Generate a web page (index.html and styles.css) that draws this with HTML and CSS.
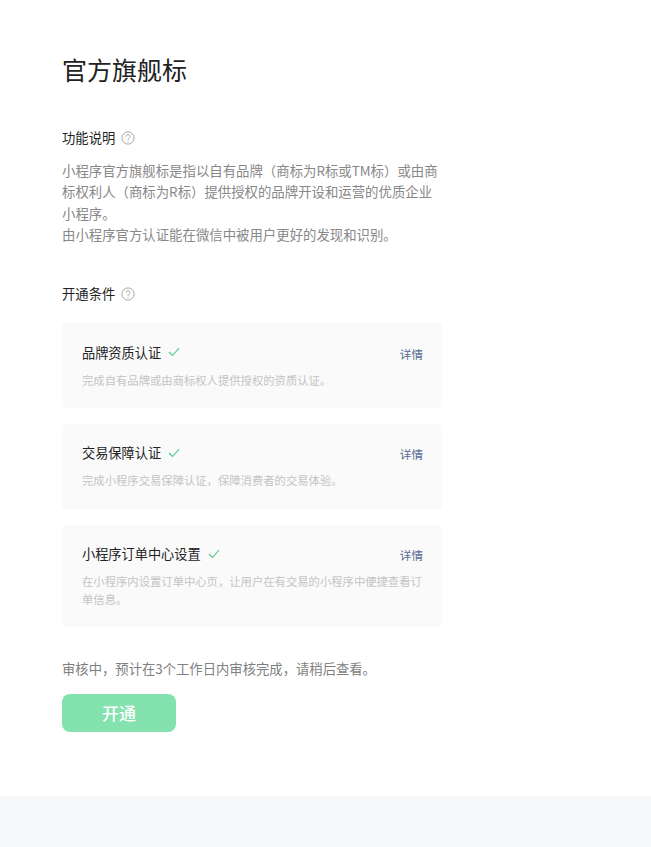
FILE: index.html
```html
<!DOCTYPE html>
<html lang="zh-CN">
<head>
<meta charset="utf-8">
<title>官方旗舰标</title>
<link rel="stylesheet" href="styles.css">
</head>
<body>
<main class="page">
  <h1 class="title">官方旗舰标</h1>
  <section class="intro">
    <h2 class="label">功能说明<svg class="help" viewBox="0 0 14 14"><circle cx="7" cy="7" r="6.1"/><path d="M5 5.5a2 2 0 1 1 3.1 1.7c-.8.5-1.1.9-1.1 1.6"/><path d="M7 9.9v1"/></svg></h2>
    <p class="desc">小程序官方旗舰标是指以自有品牌（商标为R标或TM标）或由商标权利人（商标为R标）提供授权的品牌开设和运营的优质企业小程序。<br>由小程序官方认证能在微信中被用户更好的发现和识别。</p>
  </section>
  <section class="conditions">
    <h2 class="label">开通条件<svg class="help" viewBox="0 0 14 14"><circle cx="7" cy="7" r="6.1"/><path d="M5 5.5a2 2 0 1 1 3.1 1.7c-.8.5-1.1.9-1.1 1.6"/><path d="M7 9.9v1"/></svg></h2>
    <div class="cards">
      <article class="card">
        <div class="card-head">
          <h3 class="card-title">品牌资质认证<svg class="check" viewBox="0 0 12 10"><path d="M1 5l3.5 3.5L11 1.2"/></svg></h3>
          <a class="more">详情</a>
        </div>
        <p class="card-desc">完成自有品牌或由商标权人提供授权的资质认证。</p>
      </article>
      <article class="card">
        <div class="card-head">
          <h3 class="card-title">交易保障认证<svg class="check" viewBox="0 0 12 10"><path d="M1 5l3.5 3.5L11 1.2"/></svg></h3>
          <a class="more">详情</a>
        </div>
        <p class="card-desc">完成小程序交易保障认证，保障消费者的交易体验。</p>
      </article>
      <article class="card">
        <div class="card-head">
          <h3 class="card-title">小程序订单中心设置<svg class="check" viewBox="0 0 12 10"><path d="M1 5l3.5 3.5L11 1.2"/></svg></h3>
          <a class="more">详情</a>
        </div>
        <p class="card-desc">在小程序内设置订单中心页，让用户在有交易的小程序中便捷查看订单信息。</p>
      </article>
    </div>
  </section>
  <p class="status">审核中，预计在3个工作日内审核完成，请稍后查看。</p>
  <button class="open" type="button">开通</button>
</main>
<footer class="foot"></footer>
</body>
</html>
```
FILE: styles.css
```css
* { box-sizing: border-box; }
html, body { margin: 0; padding: 0; }
body {
  width: 651px;
  height: 847px;
  overflow: hidden;
  background: #fff;
  font-family: "Noto Sans CJK SC", "Liberation Sans", sans-serif;
  display: flex;
  flex-direction: column;
}
.page {
  height: 796px;
  padding: 51px 0 0 62px;
  width: 442px;
  flex: none;
}
.title {
  margin: 0;
  font-size: 25px;
  font-weight: 400;
  line-height: 36px;
  color: #222;
}
.intro { margin-top: 41px; }
.label {
  margin: 0;
  display: flex;
  align-items: center;
  font-size: 13.33px;
  font-weight: 400;
  line-height: 20px;
  color: #222;
}
.help {
  width: 14px;
  height: 14px;
  margin-left: 5.5px;
  fill: none;
  stroke: #a8a8a8;
  stroke-width: 1;
}
.desc {
  margin: 12px 0 0;
  width: 378px;
  font-size: 13.4px;
  line-height: 21.33px;
  color: #888;
}
.conditions { margin-top: 39px; }
.cards {
  margin-top: 19px;
  display: flex;
  flex-direction: column;
  gap: 16px;
}
.card {
  background: #fafafa;
  border-radius: 4px;
  padding: 19px 19px 19.17px 20px;
}
.card-head {
  display: flex;
  justify-content: space-between;
  align-items: center;
  height: 20px;
}
.card-title {
  margin: 0;
  display: flex;
  align-items: center;
  font-size: 13.2px;
  font-weight: 400;
  color: #222;
}
.check {
  width: 12px;
  height: 10px;
  margin-left: 7px;
  fill: none;
  stroke: #4fc98a;
  stroke-width: 1.1;
}
.more {
  padding-top: 3px;
  font-size: 11.6px;
  color: #576b95;
}
.card-desc {
  margin: 8.5px 0 0;
  font-size: 11.33px;
  line-height: 18px;
  color: #c4c4c4;
}
.status {
  margin: 32px 0 0;
  font-size: 13.33px;
  line-height: 20px;
  color: #808080;
}
.open {
  display: block;
  margin-top: 15px;
  width: 114px;
  height: 38px;
  border: 0;
  border-radius: 8px;
  background: #83e2ae;
  color: #fff;
  font-family: inherit;
  font-size: 17px;
  font-weight: 500;
  padding: 0 0 2px;
}
.foot {
  flex: 1;
  background: #f6f8f9;
}
```
